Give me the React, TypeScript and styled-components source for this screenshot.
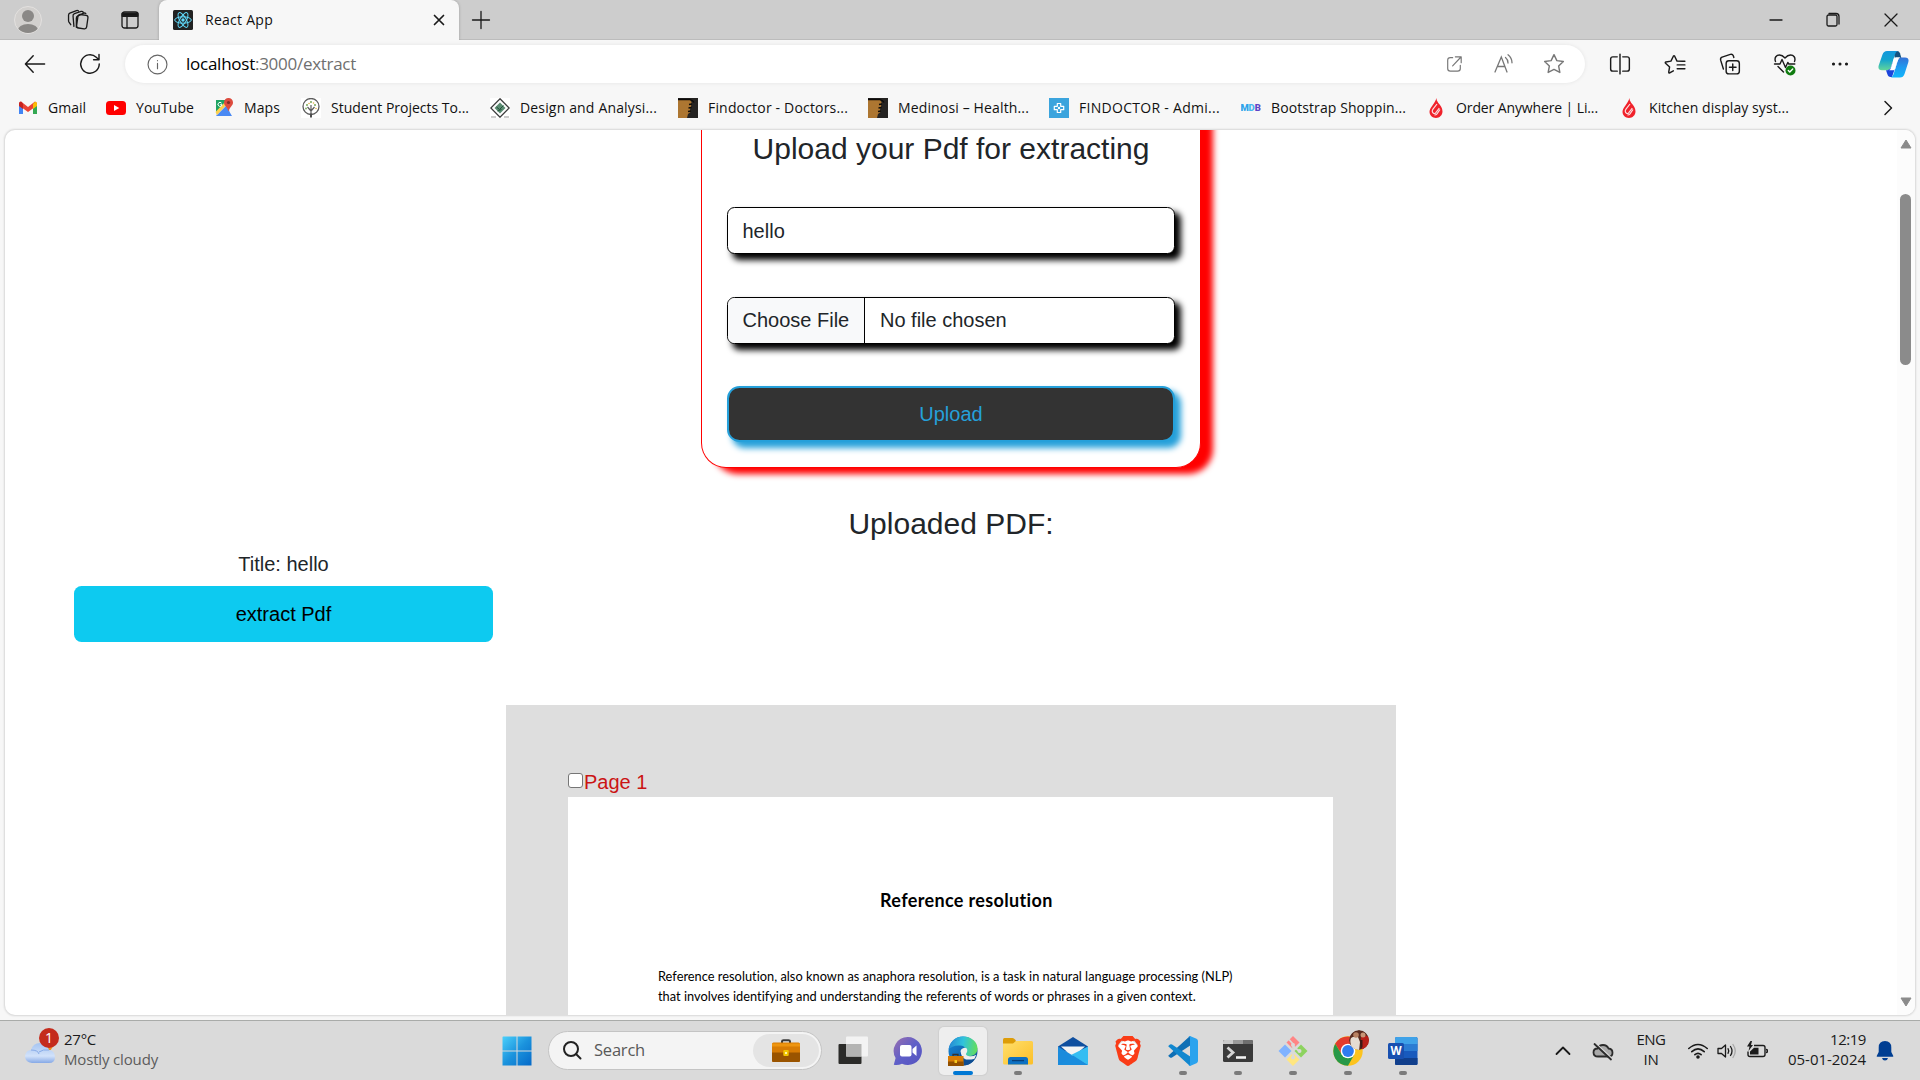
import React, { useLayoutEffect, useRef, useState } from "react";
import styled, { createGlobalStyle } from "styled-components";
import { SiBrave } from "react-icons/si";

const ui = `"Open Sans", "Noto Sans", sans-serif`;

const GlobalStyle = createGlobalStyle`
  *, *::before, *::after { box-sizing: border-box; }
  html, body { margin: 0; overflow: hidden; }
  body { background: #f7f7f7; font-family: "Liberation Sans", Arial, sans-serif; color: #212529; }
  svg { display: block; flex: none; }
`;

const Screen = styled.div`
  width: 1920px;
  height: 1080px;
  display: flex;
  flex-direction: column;
  overflow: hidden;
`;

/* ---------- text that fills a known width ---------- */

const FitBox = styled.span<{ $w: number }>`
  display: block;
  flex: none;
  width: ${(p) => p.$w}px;
  white-space: pre;
`;

function Fit({ w, children }: { w: number; children: string }) {
  const ref = useRef<HTMLSpanElement>(null);
  const [gap, setGap] = useState(0);
  useLayoutEffect(() => {
    if (!ref.current) return;
    const natural = ref.current.getBoundingClientRect().width;
    setGap((w - natural) / children.length);
  }, []);
  return (
    <FitBox $w={w}>
      <span ref={ref} style={{ letterSpacing: gap }}>
        {children}
      </span>
    </FitBox>
  );
}

/* ---------- tab strip ---------- */

const TabStrip = styled.div`
  height: 40px;
  flex: none;
  display: flex;
  align-items: center;
  background: #cdcdcd;
  box-shadow: inset 0 -1px 0 #bcbcbc;
  font-family: ${ui};
`;

const Cell = styled.div<{ $w: number }>`
  width: ${(p) => p.$w}px;
  flex: none;
  display: flex;
  align-items: center;
  justify-content: center;
`;

const StripStart = styled.div`
  display: flex;
  align-items: center;
  width: 159px;
  padding-left: 3px;
`;

const Tab = styled.div`
  width: 300px;
  height: 40px;
  flex: none;
  display: flex;
  align-items: center;
  padding: 0 10px 0 14px;
  gap: 12px;
  background: #f7f7f7;
  border-radius: 8px 8px 0 0;
  box-shadow: 0 0 3px rgba(0, 0, 0, 0.25);
  clip-path: inset(-4px -4px 0 -4px);
  font-size: 14px;
  line-height: 20px;
  color: #111;
`;

const TabTitle = styled.div`
  padding-bottom: 1px;
`;

const Spacer = styled.div`
  flex: 1;
`;

/* ---------- toolbar ---------- */

const Toolbar = styled.div`
  height: 47px;
  flex: none;
  display: flex;
  align-items: center;
  padding: 0 0 0 7px;
  background: #f7f7f7;
  font-family: ${ui};
`;

const AddressBar = styled.div`
  width: 1460px;
  height: 38px;
  margin-left: 8px;
  margin-top: 1px;
  display: flex;
  align-items: center;
  padding: 0 6px 0 22px;
  border-radius: 19px;
  background: #fff;
  box-shadow: 0 0 4px rgba(0, 0, 0, 0.08);
`;

const Url = styled.div`
  display: flex;
  margin-left: 18px;
  padding-bottom: 1px;
  font-size: 17px;
  line-height: 24px;
  color: #6f6f6f;
`;

const Host = styled.div`
  color: #000;
`;

const Bookmarks = styled.div`
  height: 42px;
  flex: none;
  display: flex;
  align-items: center;
  padding: 0 0 0 18px;
  background: #f7f7f7;
  font-family: ${ui};
  font-size: 14px;
  line-height: 20px;
  color: #111;
`;

const Bookmark = styled.div<{ $after: number }>`
  display: flex;
  align-items: center;
  gap: 10px;
  margin-right: ${(p) => p.$after}px;
`;

/* ---------- page ---------- */

const Viewport = styled.div`
  height: 885px;
  flex: none;
  margin: 1px 5px 0;
  display: flex;
  overflow: hidden;
  background: #fff;
  border-radius: 10px;
  box-shadow: 0 0 2px 1px rgba(0, 0, 0, 0.13);
`;

const Page = styled.main`
  width: 1892px;
  height: 885px;
  overflow: hidden;
  display: flex;
  flex-direction: column;
  font-size: 20px;
  line-height: 30px;
`;

const Card = styled.form`
  width: 500px;
  height: 388px;
  flex: none;
  align-self: center;
  display: flex;
  flex-direction: column;
  margin-top: -50px;
  padding: 51px 25px 0;
  border: 1px solid red;
  border-top: 0;
  border-radius: 25px;
  box-shadow: 12px 6px 6.25px red;
  background: #fff;
`;

const Heading = styled.h4<{ $top?: number }>`
  margin: ${(p) => p.$top ?? 0}px 0 0;
  flex: none;
  font-size: 30px;
  line-height: 36px;
  font-weight: 400;
  text-align: center;
`;

const Field = styled.div<{ $top: number; $pad?: number }>`
  height: 47px;
  margin-top: ${(p) => p.$top}px;
  display: flex;
  align-items: center;
  overflow: hidden;
  flex: none;
  padding: ${(p) => p.$pad ?? 0}px 15px 1px 14.5px;
  border: 1px solid #000;
  border-radius: 7.5px;
  box-shadow: 5.5px 5.5px 6px #000;
  background: #fff;
`;

const FileButton = styled.div`
  height: 46px;
  width: 137px;
  flex: none;
  margin: 0 15px -1px -14.5px;
  padding: 7px 0 0 14.5px;
  white-space: nowrap;
  background: #f8f9fa;
  border-right: 1px solid #000;
`;

const UploadButton = styled.button`
  height: 56px;
  flex: none;
  margin-top: 42px;
  padding: 0;
  border: 2px solid #25a0da;
  border-radius: 12.5px;
  background: #333;
  color: #25a0da;
  font: inherit;
  box-shadow: 5.5px 5.5px 6px #25a0da;
`;

const Side = styled.section`
  width: 419px;
  margin: 7px 0 0 69px;
  flex: none;
  display: flex;
  flex-direction: column;
  text-align: center;
`;

const ExtractButton = styled.button`
  height: 56px;
  margin-top: 7px;
  padding: 0;
  border: 0;
  border-radius: 7.5px;
  background: #0dcaf0;
  color: #000;
  font: inherit;
`;

const Doc = styled.section`
  width: 890px;
  flex: 1;
  margin: 63px 0 0 501px;
  padding: 62px 63px 0 62px;
  display: flex;
  flex-direction: column;
  background: #dedede;
`;

const PageLabel = styled.label`
  display: flex;
  align-items: center;
  gap: 1px;
  height: 30px;
  color: #cb1414;
`;

const Check = styled.span`
  width: 15px;
  height: 15px;
  margin-top: -3px;
  border: 1px solid #767676;
  border-radius: 3px;
  background: #fff;
`;

const Sheet = styled.article`
  flex: 1;
  padding: 91px 0 0 90px;
  background: #fff;
  color: #000;
  font-family: Lato, Carlito, sans-serif;
`;

const SheetTitle = styled.h1`
  margin: 0 0 54px 222px;
  font-size: 18px;
  line-height: 24px;
  font-weight: 700;
`;

const SheetText = styled.div`
  font-size: 12.8px;
  line-height: 20px;
`;

const Scrollbar = styled.div`
  width: 18px;
  flex: none;
  display: flex;
  flex-direction: column;
  align-items: center;
  background: #fcfcfc;
  padding: 9px 1px 8px 0;
`;

const Thumb = styled.div`
  width: 11px;
  height: 171px;
  margin-top: 45px;
  border-radius: 6px;
  background: #8b8b8b;
`;

/* ---------- taskbar ---------- */

const Taskbar = styled.div`
  height: 60px;
  flex: none;
  margin-top: 5px;
  display: flex;
  align-items: center;
  background: #dadada;
  border-top: 1px solid #a9aba9;
  font-family: ${ui};
  font-size: 15px;
  line-height: 20px;
  color: #1b1b1b;
`;

const Weather = styled.div`
  width: 489px;
  display: flex;
  align-items: center;
  padding-left: 24px;
  gap: 5px;
`;

const TwoLines = styled.div<{ $w?: number; $align?: string }>`
  width: ${(p) => (p.$w ? `${p.$w}px` : "auto")};
  display: flex;
  flex-direction: column;
  align-items: ${(p) => p.$align ?? "flex-start"};
  padding-bottom: 4px;
`;

const Muted = styled.div`
  color: #5c5c5c;
`;

const SearchBox = styled.div`
  width: 274px;
  height: 39px;
  margin: 0 3px 1px 3px;
  display: flex;
  align-items: center;
  padding: 0 2px 0 13px;
  gap: 12px;
  border-radius: 20px;
  background: #f4f4f4;
  border: 1px solid #c4c4c4;
  font-size: 16.5px;
  color: #595959;
`;

const SearchBadge = styled.div`
  width: 66px;
  height: 33px;
  margin-left: auto;
  display: flex;
  align-items: center;
  justify-content: center;
  border-radius: 17px;
  background: #e4e4e4;
`;

const AppTile = styled.div<{ $active?: boolean }>`
  width: 48px;
  height: 48px;
  margin: 0 3.5px;
  flex: none;
  display: flex;
  flex-direction: column;
  align-items: center;
  padding-top: 9px;
  border-radius: 5px;
  background: ${(p) => (p.$active ? "#eeeeee" : "transparent")};
  box-shadow: ${(p) => (p.$active ? "0 0 1px 1px #cfcfcf" : "none")};
`;

const Indicator = styled.div<{ $active?: boolean }>`
  width: ${(p) => (p.$active ? 20 : 8)}px;
  height: 4px;
  margin-top: 5px;
  border-radius: 2px;
  background: ${(p) => (p.$active ? "#0078d4" : "#7b7b7b")};
`;

/* ---------- icons ---------- */

type LineProps = { s?: number; c?: string; w?: number; children: React.ReactNode };

const Line = ({ s = 20, c = "#1a1a1a", w = 1.3, children }: LineProps) => (
  <svg width={s} height={s} viewBox="0 0 20 20" fill="none" stroke={c} strokeWidth={w} strokeLinecap="round" strokeLinejoin="round">
    {children}
  </svg>
);

const Avatar = () => (
  <svg width="28" height="28" viewBox="0 0 28 28">
    <defs><clipPath id="av"><circle cx="14" cy="14" r="13" /></clipPath></defs>
    <circle cx="14" cy="14" r="13.5" fill="#d2d0ce" stroke="#e3e1df" />
    <g fill="#8a8886" clipPath="url(#av)"><circle cx="14" cy="10" r="6" /><ellipse cx="14" cy="25" rx="10.5" ry="7" /></g>
  </svg>
);

const Workspaces = () => (
  <Line s={22} w={1.2}>
    <rect x="9.3" y="5.3" width="9.2" height="12.4" rx="2" transform="rotate(8 14 11.5)" />
    <path d="M6.3 15.8 5.5 6.5a2 2 0 0 1 1.3-2.2l6-2.1q1.300-.4 1.900.6M3.400 14.300 1.800 12a3 3 0 0 1-.4-1.500V5.600a2 2 0 0 1 1.200-1.800l6-2.400q1-.3 1.700.2M8.500 16.700V8.300a2 2 0 0 1 1.100-1.800l5.500-2.700q1.300-.5 2 .4" />
  </Line>
);

const TabActions = () => (
  <Line><rect x="2" y="2" width="16" height="16" rx="2.500" /><path d="M2.500 3.500h15v2.500h-15z" fill="#111" strokeWidth="2" /><path d="M7 7v11" /></Line>
);

const ReactFavicon = () => (
  <svg width="20" height="20" viewBox="0 0 20 20">
    <rect width="20" height="20" rx="1.500" fill="#222" />
    <g fill="none" stroke="#61dafb" strokeWidth="1">
      <ellipse cx="10" cy="10" rx="8.300" ry="3.200" />
      <ellipse cx="10" cy="10" rx="8.300" ry="3.200" transform="rotate(60 10 10)" />
      <ellipse cx="10" cy="10" rx="8.300" ry="3.200" transform="rotate(120 10 10)" />
    </g>
    <circle cx="10" cy="10" r="1.700" fill="#61dafb" />
  </svg>
);

const Star = ({ list }: { list?: boolean }) =>
  list ? (
    <Line s={22}>
      <path d="m8.500 16.200-3.300 1.900q-1 .4-.9-.700l.8-4.700L1.400 9.300q-.7-.8.4-1.100l4.500-.8 2.200-4.500q.6-1 1.200 0l2.100 4.500 5 .1M12 10.800h7M12 14.300h7M13.500 7.500h5.500" />
    </Line>
  ) : (
    <Line s={22} c="#777"><path d="m10 1.500 2.600 5.400 5.900.8-4.300 4.100 1.100 5.900L10 14.900l-5.300 2.800 1.100-5.900L1.500 7.700l5.900-.8z" /></Line>
  );

const ReadAloud = () => (
  <svg width="22" height="22" viewBox="0 0 22 22" fill="none" stroke="#777" strokeWidth="1.300" strokeLinecap="round">
    <path d="m2 19 6.300-15L14 19M4.300 13.500h7.700M12.500 4.500q2.500 2 2.500 5.500M15 1.800q4 3.200 4 8" />
  </svg>
);

const Health = () => (
  <svg width="24" height="24" viewBox="0 0 24 24" fill="none" stroke="#1a1a1a" strokeWidth="1.400" strokeLinecap="round" strokeLinejoin="round">
    <path d="M2.500 9.500C1 5.500 3.500 3 6.500 3 9 3 10.500 4.300 12 6c1.500-1.700 3-3 5.500-3 3 0 5.500 2.500 4 6.500M1.500 12H7l2-4.500 3.500 8 2.300-5 1 1.500h6M5 14.500l5.500 5.500" />
    <circle cx="17.500" cy="18.500" r="5" fill="#0f7b0f" stroke="none" />
    <path d="m15.300 18.600 1.500 1.500 2.900-3" stroke="#fff" />
  </svg>
);

const Copilot = () => (
  <svg width="31" height="28" viewBox="0 0 31 28">
    <defs>
      <linearGradient id="cp1" x1="0" y1="0" x2="0" y2="1"><stop offset="0" stopColor="#1398dd" /><stop offset=".45" stopColor="#14a4cf" /><stop offset="1" stopColor="#63d69a" /></linearGradient>
      <linearGradient id="cp2" x1="0" y1="0" x2="0" y2="1"><stop offset="0" stopColor="#3571d6" /><stop offset=".5" stopColor="#1f9bf0" /><stop offset="1" stopColor="#12b6fb" /></linearGradient>
    </defs>
    <path d="M15 1h4q2.300 0 3 2.300l1.500 5.200H17z" fill="#14527f" />
    <path d="M9 1h10.500Q17.500 2 16.800 5L13 17q-1 3.300-4 3.300H4Q-.5 20.300.7 15.500L4.500 4.500Q5.700 1 9 1z" fill="url(#cp1)" />
    <path d="M8 20.300h1.500q2.500-.2 3.500-3l2-6 4 1-5 14.700h-1.500q-2.400 0-3.200-3z" fill="#1b45dc" />
    <path d="M22 27.500h-9q2-.8 2.800-4L19.600 11q1-3.500 4-3.500H27q4.500 0 3.300 4.800L26.500 24q-1.200 3.500-4.500 3.500z" fill="url(#cp2)" />
    <path d="M15.700 9q.7-1.700 2.300-1.700h4.500q-2 .6-2.900 3.700l-2.400 7.800q-.6 1.500-2 1.500h-4q1.300-.7 1.900-3z" fill="#fff" />
  </svg>
);

const Gmail = () => (
  <svg width="20" height="20" viewBox="0 0 20 20">
    <path d="M1 5v11h4V9z" fill="#4285f4" /><path d="M19 5v11h-4V9z" fill="#34a853" />
    <path d="m1 5 2-1.500 7 5.500 7-5.500L19 5v2.500l-9 6.500-9-6.500z" fill="#ea4335" /><path d="M15 6l2-2.300q2-.2 2 2V8l-4 3z" fill="#fbbc04" /><path d="M1 8V5.500Q1 3.500 3 3.500l2 2V11z" fill="#c5221f" />
  </svg>
);

const YouTube = () => (
  <svg width="20" height="20" viewBox="0 0 20 20"><rect y="3" width="20" height="14" rx="3.500" fill="#f00" /><path d="m8 7 5.300 3L8 13z" fill="#fff" /></svg>
);

const Maps = () => (
  <svg width="20" height="20" viewBox="0 0 20 20">
    <path d="M2 2h14v16H2z" fill="#dfe3e6" /><path d="M2 2h11L2 15z" fill="#1ea362" /><path d="M2 18 12 8l6 10z" fill="#4a89f3" /><path d="M1.500 14 13 2l2 2L3 17z" fill="#ffd04c" />
    <path d="M14.500 0A4.500 4.500 0 0 1 19 4.600c0 3.400-3.500 4.400-4.300 8.400h-.5C13.500 9 10 8 10 4.600A4.500 4.500 0 0 1 14.500 0z" fill="#dd4b3e" /><circle cx="14.500" cy="4.500" r="1.600" fill="#822c25" />
    <path d="M7.600 5.200A2 2 0 1 0 8 6.700H6.200" fill="none" stroke="#fff" />
  </svg>
);

const Tree = () => (
  <svg width="20" height="20" viewBox="0 0 20 20">
    <rect width="20" height="20" fill="#fff" /><circle cx="10" cy="8.500" r="8" fill="none" stroke="#5d5d5d" strokeWidth="1.300" />
    <path d="M10 19V7m0 6 3.500-4M10 13 6.500 9" stroke="#5d5d5d" strokeWidth="1.200" fill="none" />
    <path d="M10 19.500v-4" stroke="#4d4d4d" strokeWidth="2" />
    <g fill="#79a957"><circle cx="6" cy="7" r="1" /><circle cx="10" cy="4" r="1" /><circle cx="14" cy="7" r="1" /><circle cx="5" cy="10.500" r=".9" /></g>
    <g fill="#e2b344"><circle cx="8" cy="5.500" r=".8" /><circle cx="12.500" cy="5" r=".8" /><circle cx="15" cy="10.500" r=".8" /></g>
  </svg>
);

const Diamond = () => (
  <svg width="20" height="20" viewBox="0 0 20 20">
    <rect width="20" height="20" fill="#fff" /><path d="m10 .8 9.200 9.200-9.200 9.200L.8 10z" fill="none" stroke="#3b3b3b" strokeWidth="1.300" /><path d="m10 4.500 5.500 5.500-5.500 5.500L4.500 10z" fill="#5b8c72" />
    <path d="m6.500 9 3 2.500 4-4M7.500 13l4-1.500" stroke="#24523b" fill="none" /><path d="M1 19h5M14 19h5" stroke="#999" />
  </svg>
);

const Fist = () => (
  <svg width="20" height="20" viewBox="0 0 20 20"><rect width="20" height="20" fill="#252322" /><path d="M0 2h12l1.500 2-.5 5-1 2 .5 3-2.500 2-1 4H0z" fill="#ad7631" /><path d="M0 1.500h12q3 1 4 3M14 6l-3 .5M13.500 9.500l-3 .5M13 13l-3 .500" stroke="#0c0a09" fill="none" strokeWidth="1.300" /></svg>
);

const Findoctor = () => (
  <svg width="20" height="20" viewBox="0 0 20 20"><rect width="20" height="20" fill="#3ba4dd" /><path d="M8.300 5.500h3.400v2.800h3v3.400h-3v2.800H8.300v-2.800h-3V8.300h3z" fill="none" stroke="#fff" strokeWidth="1.200" strokeLinejoin="round" /><circle cx="10" cy="10" r="1.200" fill="#fff" /></svg>
);

const Mdb = () => (
  <svg width="20" height="20" viewBox="0 0 20 20" fontFamily="Roboto, sans-serif" fontWeight="900" fontSize="9.500">
    <text x="-.5" y="13.400" fill="#2ea3ea">M</text><text x="7.500" y="13.400" fill="#49b6ef">D</text><text x="13.700" y="13.400" fill="#5f45c6">B</text>
  </svg>
);

const Flame = () => (
  <svg width="20" height="20" viewBox="0 0 20 20">
    <path d="M10.500 0q-.5 2.300 1.800 5 4.200 4.300 4.200 8.300c0 4-3 6.700-6.500 6.700s-6.500-2.500-6.500-6.200C3.500 9.500 8.500 6.500 10.500 0z" fill="#f0222b" />
    <path d="m11 6-4 5.200q-1.800 2.700.8 4.300 1.500.5 2.500-1.500l3-3.800M14 11.500l-3 4.300q-1 1.300-2.500 1.200" stroke="#fbdfe0" fill="none" strokeWidth="1.200" />
  </svg>
);

const WeatherIcon = () => (
  <svg width="35" height="40" viewBox="0 0 35 40">
    <defs><linearGradient id="cl" x1="0" y1="0" x2="0" y2="1"><stop offset="0" stopColor="#a5c4f1" /><stop offset=".65" stopColor="#d2e2fa" /><stop offset="1" stopColor="#86a9e6" /></linearGradient></defs>
    <circle cx="23" cy="18" r="6" fill="#f48a18" />
    <path d="M8 36q-7-1-7-7 1-6 6-6 2-7 9-7t9 7q6 1 6 7t-6 6z" fill="url(#cl)" />
    <path d="M7 23q7 0 8 4M15 25q4-3 10-2" fill="none" stroke="#87abe8" />
    <circle cx="25" cy="11" r="10" fill="#c42b1c" /><text x="25" y="16" fontSize="14" fill="#fff" textAnchor="middle">1</text>
  </svg>
);

const WeatherLift = styled.div`
  margin-top: -8px;
`;

const Windows = () => (
  <svg width="30" height="30" viewBox="0 0 30 30">
    <defs><linearGradient id="wn" x1="0" y1="0" x2="1" y2="1"><stop offset="0" stopColor="#4bd0fb" /><stop offset=".5" stopColor="#1b93dd" /><stop offset="1" stopColor="#0569c8" /></linearGradient></defs>
    <path d="M1 .5h13.500v14H.500V1zM15.500.500h14v14h-14zM.5 15.500h14v14H.5zM15.500 15.500h14v14h-14z" fill="url(#wn)" />
  </svg>
);

const Briefcase = ({ s = 28 }: { s?: number }) => (
  <svg width={s} height={(s * 23) / 28} viewBox="0 0 28 23">
    <path d="M10 4V2.500Q10 1.200 11.500 1.200h5Q18 1.200 18 2.500V4" fill="none" stroke="#3a3a3a" strokeWidth="2" />
    <rect y="3.500" width="28" height="19.500" rx="1.500" fill="#d87c04" /><path d="M0 13.500h28v8q0 1.500-1.500 1.500h-25Q0 23 0 21.500z" fill="#9a5400" /><path d="M0 4.500h28v3H0z" fill="#ee950f" />
    <rect x="11.300" y="11" width="5.400" height="6" rx="1" fill="#f2c500" /><rect x="13" y="13" width="2" height="2" fill="#fff5a8" />
  </svg>
);

const TaskView = () => (
  <svg width="30" height="30" viewBox="0 0 30 30"><rect x=".5" y="8" width="23" height="20" rx="1" fill="#2b2b29" /><rect x="8" y=".5" width="22" height="20" rx="1" fill="#f3f3f3" /><path d="M8 8h15.500v12.500H8z" fill="#b4b4b3" /></svg>
);

const Chat = () => (
  <svg width="30" height="30" viewBox="0 0 30 30">
    <defs><linearGradient id="ch" x1="0" y1="0" x2="1" y2="1"><stop offset="0" stopColor="#9b6fae" /><stop offset=".5" stopColor="#5f5fc8" /><stop offset="1" stopColor="#5553c0" /></linearGradient></defs>
    <path d="M15 1a14 14 0 1 1-6 26.700Q5 29.500.8 28.700L2.600 22A14 14 0 0 1 15 1z" fill="url(#ch)" /><rect x="7" y="9" width="11.500" height="11.500" rx="2" fill="#fff" /><path d="m19.500 13 4-3.500v10.500l-4-3.500z" fill="#fff" />
  </svg>
);

const Edge = () => (
  <svg width="30" height="30" viewBox="0 0 30 30">
    <defs>
      <linearGradient id="e1" x1="0" y1=".3" x2="1" y2=".4"><stop offset="0" stopColor="#2687d4" /><stop offset=".5" stopColor="#30c3dc" /><stop offset="1" stopColor="#62de5c" /></linearGradient>
      <linearGradient id="e2" x1="0" y1="0" x2="1" y2="1"><stop offset="0" stopColor="#168bdd" /><stop offset="1" stopColor="#0d4a8c" /></linearGradient>
    </defs>
    <circle cx="15" cy="15" r="14.500" fill="url(#e2)" />
    <path d="M.6 13.500C2 5 8 .5 15 .5c9 0 14.500 6 14.500 12 0 5-4 7.500-8 7.500-3 0-5-1-4.300-2.300 2.300-3 .8-7.700-5-8.200C7 9 2.500 11 .6 13.500z" fill="url(#e1)" />
    <path d="M12.500 15a4.200 4.200 0 0 1 6.300-2.500q1.300 2.500-.9 5.500.5 2 4 2.300 3.500.2 6.300-1.500l-2 4.700H18q-5-2-5.500-8.500z" fill="#eee" />
    <path d="M13 16q-1 8 7 8.500 3.500 0 7-2-4 7-12 7-7-4-2-13.500z" fill="#0e4d92" />
    <g transform="translate(0 17)"><rect y="3" width="15.500" height="10" fill="#d87c04" /><rect y="8.500" width="15.500" height="4.500" fill="#925000" /><path d="M5 3V1.500h5V3" fill="none" stroke="#333" strokeWidth="1.300" /><rect x="6.500" y="7" width="2.500" height="3" fill="#f5ca20" /></g>
  </svg>
);

const Explorer = () => (
  <svg width="30" height="30" viewBox="0 0 30 30">
    <defs><linearGradient id="ex" x1="0" y1="0" x2="1" y2="1"><stop offset="0" stopColor="#ffdf6d" /><stop offset="1" stopColor="#fcbf27" /></linearGradient></defs>
    <path d="M0 10V3.500Q0 2 1.500 2h8q1.500 0 2.500 1.500L13 5l-2 5z" fill="#dd9c08" /><path d="M0 7.500h10l3-2.500h15.500Q30 5 30 6.500v20.500q0 1.500-1.500 1.500h-27Q0 28.500 0 27z" fill="url(#ex)" />
    <path d="M5 28.500v-5Q5 21 7.500 21h15q2.500 0 2.500 2.500v5z" fill="#0d71c2" /><path d="M9 24.600h12" stroke="#083f78" strokeWidth="1.300" />
  </svg>
);

const Mail = () => (
  <svg width="30" height="30" viewBox="0 0 30 30"><path d="M0 10.500 15 1l15 9.500v5H0z" fill="#0f4f9f" /><path d="M3 10.500h24L15 21z" fill="#f4f4f4" /><path d="M0 10.500 30 29H0z" fill="#1b8bdc" /><path d="M30 10.500V29L13 19z" fill="#35bdf2" /><path d="M0 29 15 19.500 30 29z" fill="#1a8ddd" /></svg>
);

const BraveWrap = styled.div`
  width: 30px;
  height: 30px;
  display: flex;
  align-items: center;
  justify-content: center;
  background: radial-gradient(circle at 50% 48%, #fff 10px, transparent 10.5px);
  color: #fa3c17;
`;

const Brave = () => <BraveWrap><SiBrave size={30} /></BraveWrap>;

const VsCode = () => (
  <svg width="30" height="30" viewBox="0 0 30 30">
    <path d="M1 19 22 0l4 7L4 21.500q-1 .7-2 0l-1.500-1.300Q0 19.500 1 19z" fill="#0f6fb5" />
    <path d="M1 11 22 30l4-7L4 8.500q-1-.7-2 0L.5 9.800Q0 10.500 1 11z" fill="#1187cf" />
    <path d="M22 0l6.500 2.800Q30 3.500 30 5v20q0 1.500-1.500 2.200L22 30q-1 0-1.500-.7Q22 29.500 22 28V2Q22 .7 20.500.700 21 0 22 0z" fill="#2ba3ee" />
  </svg>
);

const Terminal = () => (
  <svg width="30" height="30" viewBox="0 0 30 30"><rect y="4" width="30" height="22" rx="1.500" fill="#3a3a3a" /><path d="M1.500 4H10v4H0V5.500Q0 4 1.500 4z" fill="#cacaca" /><path d="M10 4h10v4H10z" fill="#9b9b9b" /><path d="M20 4h8.500Q30 4 30 5.500V8H20z" fill="#6f6f6f" /><path d="m4.500 11.500 5.500 5-5.500 5" fill="none" stroke="#d5d5d5" strokeWidth="2.800" /><path d="M13 21.500h10" stroke="#f2f2f2" strokeWidth="2.600" /></svg>
);

const Git = () => (
  <svg width="30" height="30" viewBox="0 0 30 30"><path d="m15 0 6.500 6.500L15 13 8.500 6.500z" fill="#ff8585" /><path d="m7 8.500 6.500 6.500L7 21.500.500 15z" fill="#80b3ff" /><path d="m23 8.500 6.500 6.500-6.500 6.500-6.500-6.500z" fill="#8dd35f" /><path d="m15 17 6.500 6.500L15 30l-6.500-6.500z" fill="#ffe680" /><path d="M11 3.500 15 8v14M15 10l6 5" stroke="#dadada" strokeWidth="1.700" fill="none" /><g fill="#dadada"><circle cx="15" cy="9" r="2" /><circle cx="15" cy="21.500" r="2" /><circle cx="21.500" cy="15" r="2" /></g></svg>
);

const Chrome = () => (
  <svg width="30" height="30" viewBox="0 0 30 30" overflow="visible">
    <defs><clipPath id="pf"><circle cx="26" cy="4" r="10" /></clipPath></defs>
    <circle cx="15" cy="15" r="14.700" fill="#fcc31e" />
    <path d="M2.200 7.800A14.700 14.700 0 0 1 27.700 7.800L15 8.500 8.500 18z" fill="#e33b2e" /><path d="M2.200 7.700A14.700 14.700 0 0 0 15 29.700l6.300-11.200L15 22l-6.300-3.600z" fill="#279847" />
    <circle cx="15" cy="15" r="7.300" fill="#fff" /><circle cx="15" cy="15" r="5.900" fill="#2f7cf0" />
    <g clipPath="url(#pf)">
      <circle cx="26" cy="4" r="10" fill="#5a2c20" />
      <path d="M18 9q-2-7 2-8h5l2 5-1 9-4 2q-3-1-4-8z" fill="#e6dcd2" />
      <path d="M28 1q5-3 9 1v10l-7 4-2-6z" fill="#b72018" />
      <circle cx="23" cy="-1" r="2.800" fill="#b98263" /><circle cx="30" cy="-1" r="2.500" fill="#c99576" />
      <path d="M27 4h2.500v7l-2 2z" fill="#3d1a16" />
    </g>
  </svg>
);

const Word = () => (
  <svg width="30" height="30" viewBox="0 0 30 30"><rect x="7" y="1" width="22.500" height="28" rx="1.500" fill="#185abd" /><path d="M7 8V2.500Q7 1 8.500 1H28q1.500 0 1.500 1.500V8z" fill="#3fa2e8" /><path d="M7 8h22.500v7H7z" fill="#2b7cd3" /><path d="M7 22h22.500v5.500q0 1.500-1.500 1.500H8.500Q7 29 7 27.500z" fill="#113f8c" /><rect y="7" width="16" height="16" rx="1.500" fill="#1850b0" /><text x="8" y="18.800" fontSize="11.500" fontWeight="700" fill="#fff" textAnchor="middle">W</text></svg>
);

const CloudOff = () => (
  <svg width="22" height="20" viewBox="0 0 22 20" fill="none" stroke="#2b2b2b" strokeWidth="1.800" strokeLinecap="round"><path d="M6 15.500q-4.500 0-4.500-4T5.500 7.500Q7 4 11 4t5.500 3.500Q20.500 8 20.500 11.700T17 15.500z" fill="#a9a9a9" /><path d="M3.500 2 20 17.500" stroke="#dadada" strokeWidth="1.400" /><path d="M2.500 3 19 18.500" strokeWidth="1.800" /></svg>
);

const Battery = () => (
  <svg width="22" height="20" viewBox="0 0 22 20" fill="none" stroke="#1b1b1b" strokeWidth="1.400" strokeLinejoin="round"><path d="M8 4.500h9q2 0 2 2v7q0 2-2 2H4q-2 0-2-2v-3" /><path d="M8 6.700h4.500v6.800H4v-3z" fill="#1b1b1b" stroke="none" /><path d="M20 8.500q1.500 0 1.500 1.500T20 11.500" strokeWidth="1.600" /><path d="M4.500 0 1 5.500h2.500l-1 4.500 4.500-6H5L6 0z" fill="#1b1b1b" stroke="none" /></svg>
);

const Bell = () => (
  <svg width="18" height="20" viewBox="0 0 18 20" fill="#003e92"><path d="M9 0q6.300 0 6.300 6.500v4.500l2 4q.3.800-.6.800H1.300q-.9 0-.6-.8l2-4V6.500Q2.700 0 9 0zM6 17h6q-.6 2.500-3 2.500T6 17z" /></svg>
);

/* ---------- data ---------- */

const bookmarks: { icon: React.ReactNode; label: string; w: number; after: number }[] = [
  { icon: <Gmail />, label: "Gmail", w: 38, after: 20 },
  { icon: <YouTube />, label: "YouTube", w: 58, after: 20 },
  { icon: <Maps />, label: "Maps", w: 36, after: 21 },
  { icon: <Tree />, label: "Student Projects To...", w: 138, after: 21 },
  { icon: <Diamond />, label: "Design and Analysi...", w: 137, after: 21 },
  { icon: <Fist />, label: "Findoctor - Doctors...", w: 140, after: 20 },
  { icon: <Fist />, label: "Medinosi – Health...", w: 131, after: 20 },
  { icon: <Findoctor />, label: "FINDOCTOR - Admi...", w: 141, after: 21 },
  { icon: <Mdb />, label: "Bootstrap Shoppin...", w: 135, after: 20 },
  { icon: <Flame />, label: "Order Anywhere | Li...", w: 142, after: 21 },
  { icon: <Flame />, label: "Kitchen display syst...", w: 140, after: 0 },
];

const apps: { icon: React.ReactNode; state?: "active" | "open" }[] = [
  { icon: <TaskView /> },
  { icon: <Chat /> },
  { icon: <Edge />, state: "active" },
  { icon: <Explorer />, state: "open" },
  { icon: <Mail /> },
  { icon: <Brave /> },
  { icon: <VsCode />, state: "open" },
  { icon: <Terminal />, state: "open" },
  { icon: <Git />, state: "open" },
  { icon: <Chrome />, state: "open" },
  { icon: <Word />, state: "open" },
];

export default function App() {
  return (
    <Screen>
      <GlobalStyle />
      <TabStrip>
        <StripStart>
          <Cell $w={50}><Avatar /></Cell>
          <Cell $w={49}><Workspaces /></Cell>
          <Cell $w={55}><TabActions /></Cell>
        </StripStart>
        <Tab>
          <ReactFavicon />
          <TabTitle><Fit w={68}>React App</Fit></TabTitle>
          <Spacer />
          <Line w={1.7}><path d="m5.500 5.500 9 9M14.500 5.500l-9 9" /></Line>
        </Tab>
        <Cell $w={43}><Line><path d="M10 1.500v17M1.500 10h17" /></Line></Cell>
        <Spacer />
        <Cell $w={57}><Line><path d="M4 10h12" /></Line></Cell>
        <Cell $w={58}><Line><rect x="4" y="5" width="10" height="11" rx="1.500" /><path d="M6 3.500h7q3 0 3 3V14" /></Line></Cell>
        <Cell $w={58}><Line><path d="m4 4 12 12M16 4 4 16" /></Line></Cell>
      </TabStrip>

      <Toolbar>
        <Cell $w={55}><Line s={24} w={1.2}><path d="M18 10H2M8.500 3.200 2 10l6.500 6.800" /></Line></Cell>
        <Cell $w={55}><Line s={24} w={1.2}><path d="M17.700 10a7.700 7.700 0 1 1-2.500-5.700L17.500 6.500M17.500 2v4.500H13" /></Line></Cell>
        <AddressBar>
          <Line s={21} c="#666" w={1.1}><circle cx="10" cy="10" r="9" /><path d="M10 9v5M10 6.300v.1" /></Line>
          <Url><Host><Fit w={69}>localhost</Fit></Host><Fit w={101}>:3000/extract</Fit></Url>
          <Spacer />
          <Cell $w={51}><Line c="#777" s={18}><path d="M8.500 3H6Q3 3 3 6v9q0 3 3 3h8q3 0 3-3v-3.500M11.500 2H18v6.500M17.500 2.500 8.500 12" /></Line></Cell>
          <Cell $w={49}><ReadAloud /></Cell>
          <Cell $w={51}><Star /></Cell>
        </AddressBar>
        <Spacer />
        <Cell $w={55}><Line s={22}><path d="M10 1v18M7.500 3.500H3.500Q1.500 3.500 1.500 5.500v9q0 2 2 2h4M12.500 3.500h4q2 0 2 2v9q0 2-2 2h-4" /></Line></Cell>
        <Cell $w={55}><Star list /></Cell>
        <Cell $w={55}><Line s={22}><rect x="6.500" y="7" width="12" height="12" rx="2.500" /><path d="M12.500 10v6M9.500 13h6M4 14.500 1.500 6.500q-.5-2 1.300-2.700l7.500-2.500q2-.500 2.700 1.200l.5 1.500" /></Line></Cell>
        <Cell $w={55}><Health /></Cell>
        <Cell $w={55}><Line><g fill="#1a1a1a"><circle cx="3.500" cy="10" r=".9" /><circle cx="10" cy="10" r=".9" /><circle cx="16.500" cy="10" r=".9" /></g></Line></Cell>
        <Cell $w={53}><Copilot /></Cell>
      </Toolbar>

      <Bookmarks>
        {bookmarks.map((b) => (
          <Bookmark key={b.label} $after={b.after}>
            {b.icon}
            <Fit w={b.w}>{b.label}</Fit>
          </Bookmark>
        ))}
        <Spacer />
        <Cell $w={64}><Line w={1.5}><path d="m7 3.500 6.500 6.500L7 16.500" /></Line></Cell>
      </Bookmarks>

      <Viewport>
        <Page>
          <Card>
            <Heading>Upload your Pdf for extracting</Heading>
            <Field $top={40} $pad={2}>hello</Field>
            <Field $top={43}><FileButton>Choose File</FileButton>No file chosen</Field>
            <UploadButton type="button">Upload</UploadButton>
          </Card>
          <Heading $top={38}>Uploaded PDF:</Heading>
          <Side>
            Title: hello
            <ExtractButton>extract Pdf</ExtractButton>
          </Side>
          <Doc>
            <PageLabel><Check />Page 1</PageLabel>
            <Sheet>
              <SheetTitle><Fit w={173}>Reference resolution</Fit></SheetTitle>
              <SheetText>
                <Fit w={575}>Reference resolution, also known as anaphora resolution, is a task in natural language processing (NLP)</Fit>
                <Fit w={538}>that involves identifying and understanding the referents of words or phrases in a given context.</Fit>
              </SheetText>
            </Sheet>
          </Doc>
        </Page>
        <Scrollbar>
          <svg width="12" height="10"><path d="m6 1 5 8H1z" fill="#8b8b8b" stroke="#8b8b8b" strokeLinejoin="round" /></svg>
          <Thumb />
          <Spacer />
          <svg width="12" height="10"><path d="M6 9 1 1h10z" fill="#8b8b8b" stroke="#8b8b8b" strokeLinejoin="round" /></svg>
        </Scrollbar>
      </Viewport>

      <Taskbar>
        <Weather>
          <WeatherLift><WeatherIcon /></WeatherLift>
          <TwoLines>
            <Fit w={32}>27°C</Fit>
            <Muted><Fit w={94}>Mostly cloudy</Fit></Muted>
          </TwoLines>
        </Weather>
        <Cell $w={56}><Windows /></Cell>
        <SearchBox>
          <Line s={20} c="#222" w={2}><circle cx="9" cy="9" r="7" /><path d="m14 14 4.500 4.500" /></Line>
          <Fit w={51}>Search</Fit>
          <SearchBadge><Briefcase /></SearchBadge>
        </SearchBox>
        {apps.map((a, i) => (
          <AppTile key={i} $active={a.state === "active"}>
            {a.icon}
            {a.state && <Indicator $active={a.state === "active"} />}
          </AppTile>
        ))}
        <Spacer />
        <Cell $w={40}><Line w={1.8}><path d="m3.500 13 6.500-6.500 6.500 6.500" /></Line></Cell>
        <Cell $w={40}><CloudOff /></Cell>
        <TwoLines $w={56} $align="center"><Fit w={29}>ENG</Fit><Fit w={15}>IN</Fit></TwoLines>
        <Cell $w={37}><Line w={1.6}><path d="M.8 7.500q9.200-8 18.400 0M3.800 10.700q6.200-5.500 12.400 0M6.900 13.700q3.100-2.700 6.200 0" /><circle cx="10" cy="16" r="1" fill="#1a1a1a" /></Line></Cell>
        <Cell $w={22}><Line><path d="M1 7.500h3.500L8.500 4v12l-4-3.500H1zM11 7.700q1.500 2.300 0 4.600M13.500 5.500q3 4.500 0 9" /><path d="M16 3.500q4.500 6.500 0 13" stroke="#a8a8a8" /></Line></Cell>
        <Cell $w={38}><Battery /></Cell>
        <Cell $w={12} />
        <TwoLines $w={78} $align="flex-end"><Fit w={36}>12:19</Fit><Fit w={78}>05-01-2024</Fit></TwoLines>
        <Cell $w={38}><Bell /></Cell>
        <Cell $w={16} />
      </Taskbar>
    </Screen>
  );
}
